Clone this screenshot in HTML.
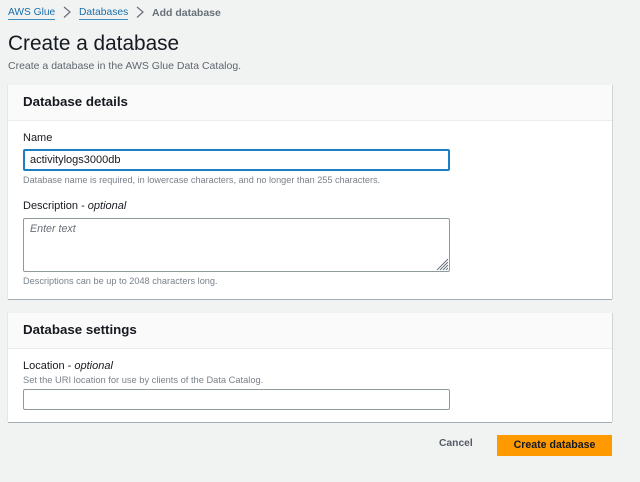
<!DOCTYPE html>
<html><head><meta charset="utf-8">
<style>
html,body{margin:0;padding:0}
body{width:640px;height:482px;background:#f1f3f3;position:relative;overflow:hidden;font-family:"Liberation Sans",sans-serif;color:#16191f}
.t{position:absolute;white-space:nowrap;line-height:14px}
.b{position:absolute}
.hint{font-size:9.2px;color:#7a828a}
.lab{font-size:11px;color:#16191f}
.h2{font-size:13.3px;font-weight:bold;color:#16191f}
.panel{position:absolute;left:8px;width:604px;background:#fff;box-shadow:0 1px 0 #a3adb4,1px 0 0 #d0d4d6,-1px 0 0 #e4e7e8}
.phead{position:absolute;left:0;top:0;width:100%;background:#fafafa;border-bottom:1px solid #eaeded}
.inp{position:absolute;box-sizing:border-box;background:#fff;border:1px solid #8f9a9c;border-radius:2px}
</style></head><body>
<div class="t" style="left:8px;top:6px;font-size:10.2px;color:#1a6ea8;border-bottom:1px solid #3d8cc0;line-height:13px">AWS Glue</div>
<svg class="b" style="left:60px;top:5px" width="14" height="14"><path d="M4 2l6 5-6 5.5" fill="none" stroke="#687078" stroke-width="1.2"/></svg>
<div class="t" style="left:79px;top:6px;font-size:10.3px;color:#1a6ea8;border-bottom:1px solid #3d8cc0;line-height:13px">Databases</div>
<svg class="b" style="left:133px;top:5px" width="14" height="14"><path d="M4 2l6 5-6 5.5" fill="none" stroke="#687078" stroke-width="1.2"/></svg>
<div class="t" style="left:152px;top:6px;font-size:10.5px;font-weight:bold;color:#687078;line-height:14px">Add database</div>
<div class="t" style="left:8px;top:31px;font-size:20.8px;line-height:26px;color:#16191f">Create a database</div>
<div class="t" style="left:8px;top:59px;font-size:10.5px;color:#5f666e">Create a database in the AWS Glue Data Catalog.</div>

<div class="panel" style="top:85px;height:214px">
  <div class="phead" style="height:35px"></div>
  <div class="t h2" style="left:15px;top:10px">Database details</div>
  <div class="t lab" style="left:15px;top:46px">Name</div>
  <div class="inp" style="left:15px;top:64px;width:427px;height:22px;border:2px solid #1a80c4;border-radius:2px"></div>
  <div class="t" style="left:22px;top:68px;font-size:11px;color:#16191f">activitylogs3000db</div>
  <div class="t hint" style="left:15px;top:88px;font-size:9.15px">Database name is required, in lowercase characters, and no longer than 255 characters.</div>
  <div class="t lab" style="left:15px;top:114px">Description - <i>optional</i></div>
  <div class="inp" style="left:15px;top:133px;width:427px;height:54px"></div>
  <div class="t" style="left:22px;top:137px;font-size:10.7px;font-style:italic;color:#687078">Enter text</div>
  <svg class="b" style="left:428px;top:173px" width="13" height="13"><path d="M1 12L12 1M4 12l8-8M7 12l5-5M10 12l2-2" stroke="#6b7480" stroke-width="1" fill="none"/></svg>
  <div class="t hint" style="left:15px;top:189px">Descriptions can be up to 2048 characters long.</div>
</div>

<div class="panel" style="top:313px;height:109px">
  <div class="phead" style="height:35px"></div>
  <div class="t h2" style="left:15px;top:10px">Database settings</div>
  <div class="t lab" style="left:15px;top:46px">Location - <i>optional</i></div>
  <div class="t hint" style="left:15px;top:60px;font-size:9.3px">Set the URI location for use by clients of the Data Catalog.</div>
  <div class="inp" style="left:15px;top:76px;width:427px;height:21px"></div>
</div>

<div class="t" style="left:439px;top:437px;font-size:10.3px;font-weight:bold;color:#545b64">Cancel</div>
<div class="b" style="left:497px;top:435px;width:115px;height:21px;background:#ff9900;text-align:center;font-size:10.6px;font-weight:bold;line-height:20px;color:#16191f">Create database</div>
</body></html>
